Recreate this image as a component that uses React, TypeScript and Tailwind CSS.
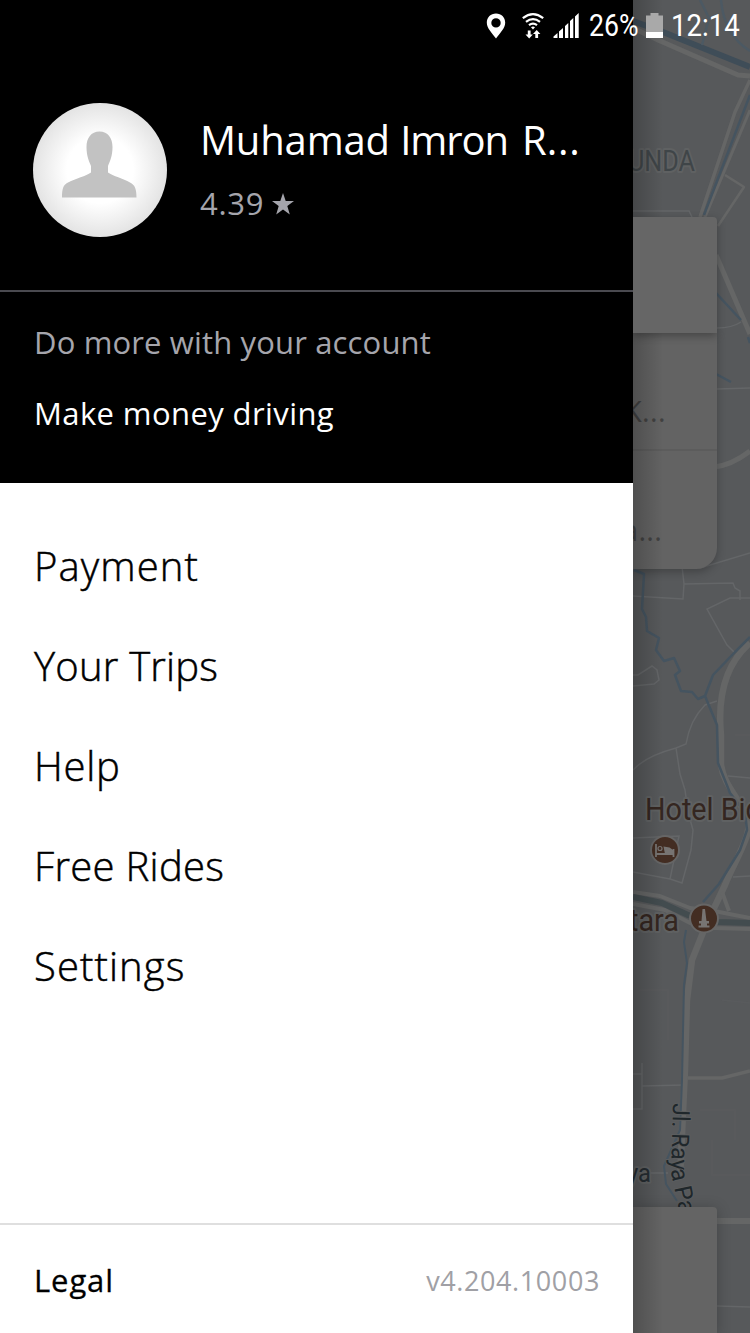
import type { ReactNode } from "react"

const navItems = [
  { label: "Payment", className: "tracking-[1.1px]" },
  { label: "Your Trips", className: "tracking-[0.2px]" },
  { label: "Help", className: "tracking-[0.7px]" },
  { label: "Free Rides", className: "tracking-[0.3px]" },
  { label: "Settings", className: "tracking-[1.1px]" },
]

function StatusBar() {
  return (
    <div className="absolute inset-x-0 top-0 z-20 h-[50px] font-['Roboto',sans-serif] text-[31px] leading-[50px] text-white">
      <div className="flex h-full items-center justify-end pt-[2px] pr-[10px]">
        <svg width="20" height="26" viewBox="0 0 20 26" className="mr-[16px]">
          <path fillRule="evenodd" fill="#fff" d="M10 .5C4.700 .5.800 4.400.800 9.600.800 15.500 6 20 10 25.500 14 20 19.200 15.500 19.200 9.600 19.200 4.400 15.300.5 10 .5Zm0 4.700a4.700 4.700 0 1 1 0 9.400 4.700 4.700 0 0 1 0-9.400Z" />
        </svg>
        <svg width="22" height="26" viewBox="0 0 22 26" className="mr-[9px]" fill="none" stroke="#fff" strokeWidth="2.200">
          <path d="M.8 5.200Q11-2.800 21.200 5.200M4 8.800Q11 3.300 18 8.800M7 12.200Q11 9 15 12.200" />
          <path fill="#fff" stroke="none" d="M9 14.300Q11 12.600 13 14.300L11 16.600ZM5.800 17.500h2.800v4h2.200L7.200 25.500 3.500 21.500h2.300ZM13.300 25v-4H11l3.700-4 3.700 4h-2.300v4Z" />
        </svg>
        <svg width="26" height="26" viewBox="0 0 26 26" className="mr-[10px]" fill="#fff">
          <path d="M.5 25v-1.500L4.500 20v5ZM6 25v-6.500l4-3.500V25ZM12 25V13L15.300 10v15ZM17 25V8L20.300 5v20ZM22 25V3.500L25.700 0v25Z" />
        </svg>
        <span className="w-[50px] whitespace-nowrap">
          <span className="inline-block origin-left scale-x-[0.86]">26%</span>
        </span>
        <svg width="17" height="26" viewBox="0 0 17 26" className="mr-[8px] ml-[7px]">
          <path fill="#a9a9a9" d="M4.500 0h8v2.500H17V25H0V2.500h4.500Z" />
          <path fill="#fff" d="M0 19h17v6H0Z" />
        </svg>
        <span className="w-[69px] whitespace-nowrap">
          <span className="inline-block origin-left scale-x-[0.89]">12:14</span>
        </span>
      </div>
    </div>
  )
}

function MapLabel({ children, x, y, size, width, fill }: { children: ReactNode; x: number; y: number; size: number; width: number; fill: string }) {
  return (
    <text x={x} y={y} fontSize={size} textLength={width} lengthAdjust="spacingAndGlyphs" fill={fill} stroke="#5f6162" strokeWidth="4" strokeLinejoin="round" paintOrder="stroke">
      {children}
    </text>
  )
}

function MapCanvas() {
  return (
    <svg viewBox="633 0 117 1333" className="absolute inset-0 h-full w-full font-['Roboto',sans-serif]" fill="none">
      <rect x="633" width="117" height="1333" fill="#57595b" />

      {/* side streets */}
      <g stroke="#646668" strokeWidth="1.500">
        <path d="M633 211H689L692 217M717 328Q732 328 741 322M717 389L750 388M700 568L750 553" />
        <path d="M682 566L684 584 683 599 633 596M684 584L733 583 735 588 740 591V600M750 598H730L707 609 727 645 735 653" />
        <path d="M633 675H638L652 666 657 670 659 680 654 684 633 686M717 701L705 705Q690 720 686 744L676 748Q646 756 633 770M676 748L680 774 685 790 688 812 693 830 691 850 682 883 670 879 679 836 633 838M633 872L670 879M728 776L750 778M733 877L750 876" />
        <path d="M642 1063V1109H633M642 1086L684 1085M633 1074H642M650 1173H668M717 1306L750 1307" />
        <path d="M722 1000L750 1003M700 1110H735V1140M712 1140V1175H750M640 990H668V1040M735 735H750" strokeOpacity=".2" />
      </g>

      {/* main roads */}
      <g stroke="#656666" strokeWidth="5" strokeLinejoin="round">
        <path d="M633 28L658 40 738 75 750 76" />
        <path d="M750 80L735 112 700 217" strokeWidth="3.500" />
        <path d="M750 110L705 217" strokeWidth="3" />
        <path d="M725 175L744 187 718 226" strokeWidth="2.500" />
        <path d="M716 255L750 334M714 467Q732 465 750 451" />
        <path d="M750 643C728 662 717 692 721 735V765C724 786 740 798 748 820 752 835 735 860 725 885L706 925 692 960 687 1000 685 1070 682 1135 680 1178" strokeWidth="6.500" />
        <path d="M688 1078H722L750 1071" strokeWidth="3.500" />
        <path d="M633 892L660 896 690 908 714 911 750 918" strokeWidth="4" />
        <path d="M633 904L665 910 690 923 714 928 750 929" strokeWidth="4" />
        <path d="M722 892L729 911" strokeWidth="4" />
        <path d="M717 1221H750" strokeWidth="6" />
      </g>

      {/* rivers and toll road */}
      <g stroke="#455460" strokeWidth="2.500" strokeLinejoin="round">
        <path d="M633 21L658 30 750 67" strokeWidth="6" stroke="#3f4d58" />
        <path d="M700 0L709 18 702 45M721 0Q724 35 750 51" stroke="#4c5963" />
        <path d="M750 95L704 215" />
        <path d="M716 293L741 320M748 337L750 343M716 374L731 382" />
        <path d="M634 570L644 574 642 609 646 617 647 631 659 638 656 650 664 661 674 658 680 671 675 675 681 691 692 692 698 699 705 696 713 675 735 652 750 637M705 696L717 725 718 763 730 793 745 812 747 830 740 850 719 884 703 902" />
        <path d="M633 897L662 903 688 915 718 922 750 923" strokeWidth="6" stroke="#434c4f" />
        <path d="M686 930L684 942 687 963 684 985 682 1080 680 1130 664 1166 666 1184 677 1201" strokeWidth="2" />
      </g>

      <MapLabel x={628} y={171} size={29} width={67} fill="#3f4548">UNDA</MapLabel>
      <MapLabel x={645} y={820} size={31} width={147} fill="#342620">Hotel Bidak</MapLabel>
      <MapLabel x={629} y={931} size={31} width={50} fill="#342620">tara</MapLabel>
      <MapLabel x={627} y={1182} size={26} width={24} fill="#252c31">ya</MapLabel>

      <path id="street" d="M673 1103L671 1172 681 1220" />
      <text fontSize="24" fill="#1f272b" stroke="#5c5e5f" strokeWidth="2" paintOrder="stroke">
        <textPath href="#street" textLength="112" lengthAdjust="spacingAndGlyphs">Jl. Raya Pa</textPath>
      </text>

      {/* lodging pin */}
      <circle cx="665" cy="850" r="14" fill="#432d22" stroke="#666" strokeWidth="2" />
      <path d="M656 844v13M673.500 849v8M656 854h17.500" stroke="#777472" strokeWidth="1.800" />
      <circle cx="660" cy="848.500" r="2" stroke="#777472" strokeWidth="1.200" />
      <path fill="#777472" d="M663.500 846.500l6 1 3.500 2.500v4h-8Z" />

      {/* monument pin */}
      <circle cx="704" cy="918.500" r="14" fill="#432d22" stroke="#666" strokeWidth="2" />
      <path fill="#777472" d="M702.500 909h2.500l1.500 12h2.500v2.500h-2v2h2.500v2h-11v-2h2.500v-2h-2v-2.500h2.500Z" />
    </svg>
  )
}

export default function App() {
  return (
    <div className="relative flex h-[1333px] w-[750px] overflow-hidden bg-black font-['Open_Sans',sans-serif]">
      <StatusBar />

      <aside className="flex w-[633px] shrink-0 flex-col bg-white">
        <header className="bg-black text-white">
          <div className="flex h-[292px] border-b-2 border-[#4a4a50] pt-[103px] pl-[33px]">
            <div className="flex size-[134px] shrink-0 items-center justify-center rounded-full bg-[radial-gradient(circle,#fff_0%,#fff_35%,#e4e4e4_70%)]">
              <svg width="134" height="134" viewBox="0 0 134 134" fill="#c2c2c2">
                <path d="M66.500 28.500C58 28.500 53.500 35 53.500 44C53.500 53 56 58 58 63V69.500C53 73 43 75.500 35 79.500C30 82 29 86 29 94.500H103.500C103.500 86 102 82 97 79.500C90 75.500 80 73 75 69.500V63C77 58 79.500 53 79.500 44C79.500 35 75 28.500 66.500 28.500Z" />
              </svg>
            </div>
            <div className="pt-[10px] pl-[33px]">
              <h1 className="text-[40px] leading-[54px] font-normal tracking-[-0.15px] whitespace-nowrap">
                Muhamad <span className="mr-[4px] tracking-[-1.1px]">Imron</span> R<span className="tracking-[0.8px]">...</span>
              </h1>
              <div className="mt-[15px] flex items-center text-[31px] leading-[42px] text-[#a5a5ac]">
                <span className="tracking-[0.7px]">4.39</span>
                <svg width="22" height="22" viewBox="0 0 22 22" className="mt-px ml-[8px]" fill="#a5a5ac">
                  <path d="M11 0L13.700 8H22L15.300 13 17.800 21.500 11 16.400 4.200 21.500 6.700 13 0 8H8.300Z" />
                </svg>
              </div>
            </div>
          </div>
          <div className="flex h-[191px] flex-col gap-[29px] pt-[29px] pl-[34px] text-[31px] leading-[42px]">
            <p className="tracking-[0.15px] text-[#a5a5ac]">Do more with your account</p>
            <p className="tracking-[0.4px]">Make money driving</p>
          </div>
        </header>

        <nav className="flex flex-1 flex-col pt-[33px] pl-[34px] text-[40px] leading-[100px] font-light text-black [-webkit-text-stroke:0.5px_black]">
          {navItems.map((item) => (
            <a key={item.label} className={item.className}>{item.label}</a>
          ))}
        </nav>

        <footer className="flex h-[110px] items-center justify-between border-t-2 border-[#dfdfdf] pt-[2px] pr-[33px] pl-[34px]">
          <span className="text-[31px] tracking-[0.9px] text-black [-webkit-text-stroke:0.3px_black]">Legal</span>
          <span className="pt-[3px] text-[27px] tracking-[0.6px] text-[#a0a0a5]">v4.204.10003</span>
        </footer>
      </aside>

      <main className="relative flex-1 overflow-hidden">
        <MapCanvas />
        <div className="relative flex h-full w-[84px] flex-col pt-[217px]">
          <section className="relative z-10 h-[116px] rounded-tr-[4px] bg-[#666] shadow-[0_3px_8px_rgba(0,0,0,0.3)]" />
          <section className="h-[236px] rounded-br-[21px] bg-[#636363] text-[29px] text-[#414141] shadow-[0_3px_8px_rgba(0,0,0,0.25)]">
            <div className="flex h-[118px] items-end border-b-2 border-[#5c5c5c] pb-[18px] leading-[40px]">
              <span className="-ml-[9px] tracking-[0.3px]">K...</span>
            </div>
            <div className="flex h-[118px] items-end pb-[19px] leading-[40px]">
              <span className="-ml-[11px] tracking-[0.3px]">a...</span>
            </div>
          </section>
          <section className="mt-auto h-[126px] rounded-tr-[4px] bg-[#646464] shadow-[0_2px_14px_rgba(0,0,0,0.25)]" />
        </div>
        <div className="absolute inset-y-0 left-0 w-[30px] bg-gradient-to-r from-black/20 to-transparent" />
      </main>
    </div>
  )
}
